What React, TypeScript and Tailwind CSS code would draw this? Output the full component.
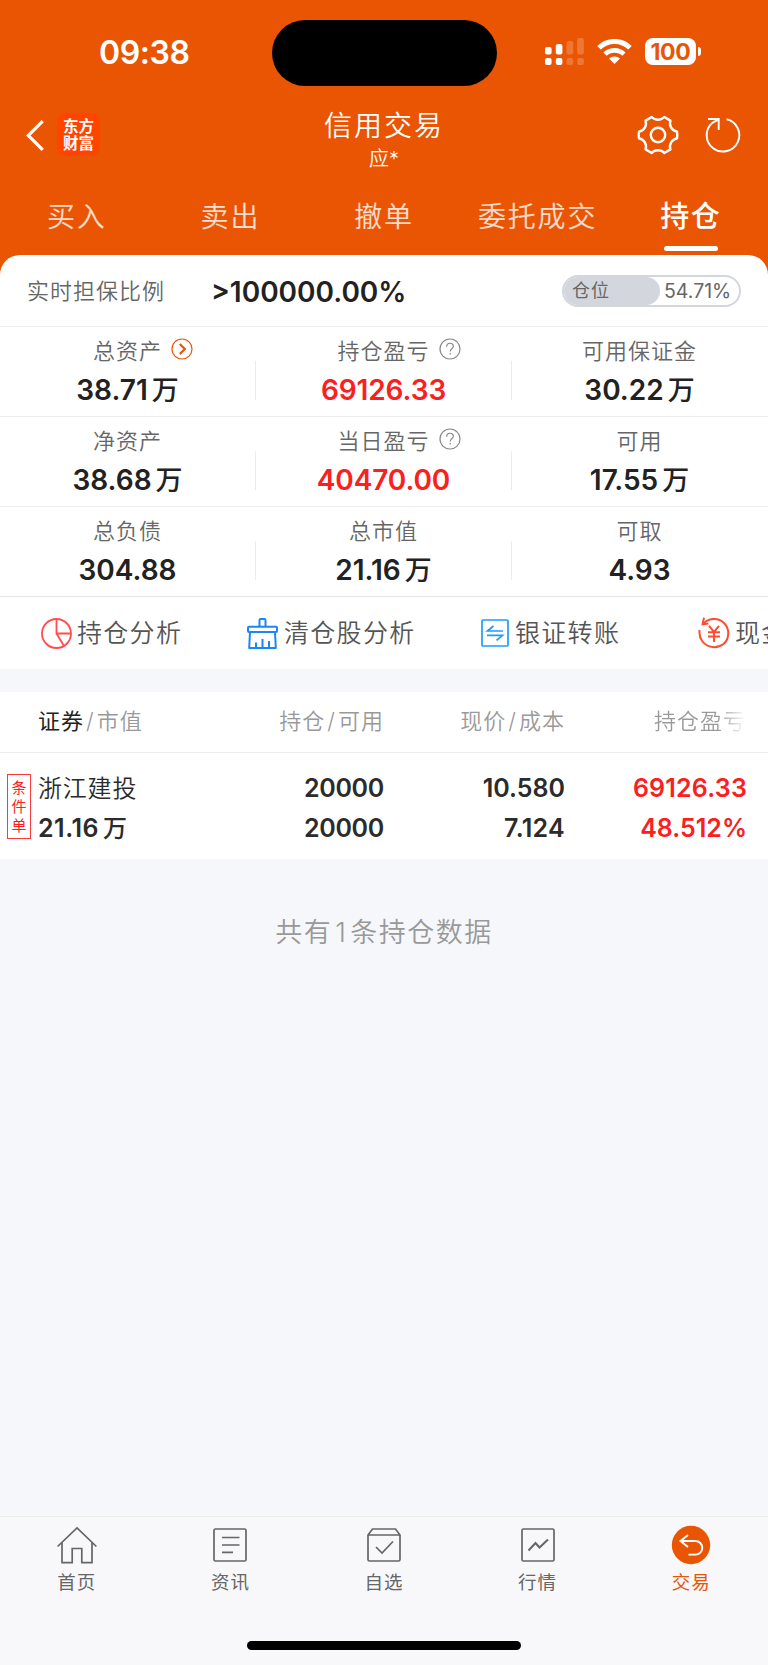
import type { ReactNode } from 'react';

const menu = ['买入', '卖出', '撤单', '委托成交', '持仓'];

interface Stat {
  label: string;
  value: string;
  unit?: string;
  red?: boolean;
  icon?: 'more' | 'help';
}

const stats: Stat[][] = [
  [
    { label: '总资产', value: '38.71', unit: '万', icon: 'more' },
    { label: '持仓盈亏', value: '69126.33', red: true, icon: 'help' },
    { label: '可用保证金', value: '30.22', unit: '万' },
  ],
  [
    { label: '净资产', value: '38.68', unit: '万' },
    { label: '当日盈亏', value: '40470.00', red: true, icon: 'help' },
    { label: '可用', value: '17.55', unit: '万' },
  ],
  [
    { label: '总负债', value: '304.88' },
    { label: '总市值', value: '21.16', unit: '万' },
    { label: '可取', value: '4.93' },
  ],
];

function StatusBar() {
  return (
    <div className="flex h-[106px] pt-5">
      <div className="w-[272px] pl-[99px] pt-[9px] text-[32px] leading-[48px] font-semibold tracking-[-0.4px]">09:38</div>
      <div className="h-[66px] w-[225px] rounded-full bg-black" />
      <svg className="ml-[48px] mt-[18px]" width="39" height="27" viewBox="0 0 39 27" fill="#fff">
        <rect x="0" y="9" width="6.6" height="7.5" rx="2" />
        <rect x="0" y="20" width="6.6" height="7" rx="2" />
        <rect x="10.8" y="6" width="6.6" height="10.5" rx="2" />
        <rect x="10.8" y="20" width="6.6" height="7" rx="2" />
        <g opacity="0.2">
          <rect x="21.6" y="3" width="6.6" height="13.5" rx="2" />
          <rect x="21.6" y="20" width="6.6" height="7" rx="2" />
          <rect x="32.2" y="0" width="6.6" height="16.5" rx="2" />
          <rect x="32.2" y="20" width="6.6" height="7" rx="2" />
        </g>
      </svg>
      <svg className="ml-[13px] mt-[19px]" width="35" height="25" viewBox="0 0 35 25" fill="none" stroke="#fff">
        <path d="M2 8.8 A22 22 0 0 1 33 8.8" strokeWidth="5" />
        <path d="M8 15.2 A13.6 13.6 0 0 1 27 15.2" strokeWidth="4.6" />
        <path d="M17.5 25 L12 19.6 A8 8 0 0 1 23 19.6 Z" fill="#fff" stroke="none" />
      </svg>
      <div className="ml-[13px] mt-[18px] flex h-[27px] w-[51px] items-center justify-center rounded-[8px] bg-white pt-px text-[23px] leading-none font-bold tracking-[-0.3px] text-[#ea5504]">
        100
      </div>
      <div className="ml-[2px] mt-[27px] h-[9px] w-[3px] rounded-r-full bg-white" />
    </div>
  );
}

function TitleBar() {
  return (
    <div className="flex h-[78px] justify-between">
      <div className="flex w-[250px] pl-[26px] pt-[7px]">
        <svg className="mt-[7px]" width="18" height="31" viewBox="0 0 18 31" fill="none" stroke="#fff" strokeWidth="3.2">
          <path d="M16.7 1.2 L2.2 15.5 L16.7 29.8" />
        </svg>
        <div className="ml-[13px] flex h-[43px] w-[43px] flex-col items-center justify-center rounded-[9px] bg-[#ff4400] pb-px font-['Noto_Sans_CJK_SC',sans-serif] text-[15.5px] leading-[17px] font-bold">
          <span>东方</span>
          <span>财富</span>
        </div>
      </div>
      <div className="flex flex-col items-center">
        <h1 className="pt-[1px] text-[28px] leading-[38px] font-[350] tracking-[2px]">信用交易</h1>
        <p className="mt-px text-[20px] leading-[26px] font-[350]">应*</p>
      </div>
      <div className="flex w-[250px] justify-end pr-[25px] pt-[9px]">
        <svg width="42" height="42" viewBox="0 0 42 42" fill="none" stroke="#fff" strokeWidth="2.4" strokeLinejoin="round">
          <path d="M14.7 2 C18 5.6 24 5.6 27.3 2 L33.4 5.6 C31.8 10.8 34.8 15.6 40 16.6 Q40.6 20 40 23.4 C34.8 24.4 31.8 29.2 33.4 34.4 L27.3 38 C24 34.4 18 34.4 14.7 38 L8.6 34.4 C10.2 29.2 7.2 24.4 2 23.4 Q1.4 20 2 16.6 C7.2 15.6 10.2 10.8 8.6 5.6 Z" />
          <circle cx="21" cy="20" r="7.2" />
        </svg>
        <svg className="ml-[26px]" width="38" height="42" viewBox="0 0 38 42" fill="none" stroke="#fff" strokeWidth="1.9">
          <path d="M21.6 4.3 A16.3 16.3 0 1 1 7.4 7.8 L13.6 4.4" />
          <path d="M3 4 H13.7 V15" />
        </svg>
      </div>
    </div>
  );
}

function Menu() {
  return (
    <div className="grid h-[71px] grid-cols-5">
      {menu.map((m) =>
        m === '持仓' ? (
          <div key={m} className="flex flex-col items-center pt-[13px] text-[29px] leading-[40px] font-medium tracking-[1.4px]">
            <span className="-ml-px">{m}</span>
            <div className="mt-[9px] h-[5px] w-[54px] rounded-full bg-white" />
          </div>
        ) : (
          <div key={m} className="pt-[13px] text-center text-[28px] leading-[40px] font-[350] tracking-[1.8px] text-white/80">
            {m}
          </div>
        )
      )}
    </div>
  );
}

function StatIcon({ type }: { type: 'more' | 'help' }) {
  return (
    <svg className="absolute top-[1px] left-full ml-[9px]" width="22" height="22" viewBox="0 0 22 22" fill="none">
      {type === 'more' ? (
        <g stroke="#ea5504">
          <circle cx="11" cy="11" r="10" strokeWidth="1.2" />
          <path d="M8.8 6 L13.8 11 L8.8 16" strokeWidth="2.2" />
        </g>
      ) : (
        <g stroke="#888" strokeWidth="1.2">
          <circle cx="11" cy="11" r="10" />
          <path d="M7.7 8.7 C7.7 4.2 14.4 4.2 14.4 8.3 C14.4 10.6 11.2 10.6 11.2 13.6" />
          <path d="M11.2 15 V16.6" />
        </g>
      )}
    </svg>
  );
}

function StatCell({ stat, divider }: { stat: Stat; divider: boolean }) {
  return (
    <div className="flex">
      <div className="flex flex-1 flex-col items-center pt-[10px] pr-px">
        <div className="relative text-[22px] leading-[28px] font-[350] tracking-[1px] text-[#666]">
          {stat.label}
          {stat.icon && <StatIcon type={stat.icon} />}
        </div>
        <div className={`mt-[8px] text-[28px] leading-[34px] font-semibold ${stat.red ? 'tracking-[-0.1px] text-[#fb2020]' : 'text-[#222]'}`}>
          {stat.value}
          {stat.unit && <span className="ml-[4px] text-[27px] leading-none font-medium">{stat.unit}</span>}
        </div>
      </div>
      {divider && <div className="-ml-px mt-[34px] h-[39px] w-px bg-[#ebebeb]" />}
    </div>
  );
}

function Action({ icon, children, className }: { icon: ReactNode; children: ReactNode; className?: string }) {
  return (
    <div className={`flex shrink-0 items-center ${className ?? ''}`}>
      {icon}
      <span className="text-[25px] leading-[36px] tracking-[1.3px] whitespace-nowrap">{children}</span>
    </div>
  );
}

function Actions() {
  return (
    <div className="flex h-[72px] overflow-hidden pl-[41px] font-[350] text-[#555]">
      <Action
        className="w-[206px]"
        icon={
          <svg className="mr-[5px]" width="31" height="31" viewBox="0 0 31 31" fill="none" stroke="#ff4d4f" strokeWidth="1.8">
            <circle cx="15.5" cy="15.5" r="14.5" />
            <path d="M15.5 1 V15.5 H30 M15.5 15.5 L23 28" />
          </svg>
        }
      >
        持仓分析
      </Action>
      <Action
        className="w-[234px]"
        icon={
          <svg className="mr-[6px]" width="31" height="31" viewBox="0 0 31 31" fill="none" stroke="#1c86f2" strokeWidth="2" strokeLinejoin="round">
            <path d="M12.5 8.7 V2.2 Q12.5 1 13.7 1 H17.3 Q18.5 1 18.5 2.2 V8.7" />
            <rect x="1" y="8.7" width="29" height="5.3" rx="1" />
            <path d="M3 14 L2.2 30 H28.8 L28 14 M9 30 V24.5 M15.5 30 V21 M22 30 V23" />
          </svg>
        }
      >
        清仓股分析
      </Action>
      <Action
        className="w-[217px]"
        icon={
          <svg className="mr-[6px]" width="28" height="28" viewBox="0 0 28 28" fill="none" stroke="#1e9bff" strokeWidth="1.7">
            <rect x="1" y="1" width="26" height="26" rx="1" />
            <path d="M22 12 H6.5 L12.5 7 M6 16.3 H21.5 L15.5 21.4" />
          </svg>
        }
      >
        银证转账
      </Action>
      <Action
        icon={
          <svg className="mr-[5px]" width="32" height="32" viewBox="0 0 32 32" fill="none" stroke="#ff4b33" strokeWidth="2">
            <path d="M4.5 7.5 C10 1 20 0 26 6 C32 12 31.5 22 25.5 27 C19 32 9.5 31 4.5 24.5 C1.5 20.5 1 17 1.6 13" />
            <path d="M6 0.6 L4.6 7.3 L10.4 6.4" />
            <path d="M11 8.8 L16 15 L21 8.8 M10 15.3 H22 M10 19.6 H22 M16 15 V25" />
          </svg>
        }
      >
        现金宝
      </Action>
    </div>
  );
}

function Holdings() {
  return (
    <>
      <div className="grid h-[61px] grid-cols-[384px_181px_181px] border-b border-[#ededed] bg-white text-[22px] leading-[59px] font-[350] tracking-[1px] text-[#999]">
        <div className="flex justify-between pl-[38px]">
          <span>
            <span className="font-normal text-[#222]">证券</span>
            <span className="mx-[2px]">/</span>市值
          </span>
          <span>持仓<span className="mx-[2px]">/</span>可用</span>
        </div>
        <div className="text-right">现价<span className="mx-[2px]">/</span>成本</div>
        <div className="bg-linear-to-r from-[#999] from-84% to-white to-100% bg-clip-text text-right text-transparent">持仓盈亏</div>
      </div>
      <div className="flex h-[106px] bg-white text-[25px] leading-[40px] font-semibold text-[#2b2b2b]">
        <div className="mt-[21px] ml-[7px] flex h-[65px] w-6 flex-col items-center justify-center border border-[#fb3b3b] text-[15px] leading-[19px] font-normal text-[#fb2020]">
          <span>条</span>
          <span>件</span>
          <span>单</span>
        </div>
        <div className="ml-[7px] w-[165px] pt-[16px]">
          <div className="text-[24px] font-[350] tracking-[0.8px]">浙江建投</div>
          <div className="-mt-px tracking-[0.5px]">
            21.16<span className="ml-[4px] text-[24px] leading-none font-medium">万</span>
          </div>
        </div>
        <div className="w-[181px] pt-[15px] text-right tracking-[-0.3px]">
          <div>20000</div>
          <div>20000</div>
        </div>
        <div className="w-[181px] pt-[15px] text-right">
          <div>10.580</div>
          <div className="tracking-[0.3px]">7.124</div>
        </div>
        <div className="w-[182px] pt-[15px] text-right text-[#fb2020]">
          <div className="tracking-[0.2px]">69126.33</div>
          <div>48.512%</div>
        </div>
      </div>
    </>
  );
}

function NavItem({ label, active, children }: { label: string; active?: boolean; children: ReactNode }) {
  return (
    <div className={`flex flex-col items-center ${active ? 'text-[#ea5504]' : 'text-[#666]'}`}>
      <svg className="mt-[8px]" width="40" height="40" viewBox="0 0 40 40" fill="none" stroke="currentColor" strokeWidth="1.7">
        {children}
      </svg>
      <span className="mt-[4px] text-[18.5px] leading-[26px] tracking-[1px]">{label}</span>
    </div>
  );
}

function BottomNav() {
  return (
    <div className="h-[149px] border-t border-[#ebebeb] bg-[#f8f8fb]">
      <div className="grid h-[124px] grid-cols-5">
        <NavItem label="首页">
          <path d="M0.6 21.5 L20 3 L39.4 21.5 M5 17.5 V37.6 H15.2 V23.5 H24.8 V37.6 H35 V17.5" />
        </NavItem>
        <NavItem label="资讯">
          <rect x="4" y="4" width="32" height="32" rx="1.5" />
          <path d="M12 12.5 H29.5 M12 20 H29.5 M12 27.3 H23" />
        </NavItem>
        <NavItem label="自选">
          <path d="M4 10 L8.5 4 H31.5 L36 10 V34.5 Q36 36 34.5 36 H5.5 Q4 36 4 34.5 Z M4 10 H36 M12 22 L18 28 L29 16.5" />
        </NavItem>
        <NavItem label="行情">
          <rect x="4" y="4" width="32" height="32" rx="1.5" />
          <path d="M10.5 25.5 L17.5 18 L21.5 22.5 L30 14.5" strokeWidth="2" />
        </NavItem>
        <NavItem label="交易" active>
          <circle cx="20" cy="20" r="19.2" fill="currentColor" stroke="none" />
          <path d="M17 10 L9.5 16 L17 22 M9.5 16 H24.5 A6.8 6.8 0 0 1 24.5 29.6 H17.5" stroke="#fff" strokeWidth="1.9" />
        </NavItem>
      </div>
      <div className="mx-auto h-[9px] w-[274px] rounded-full bg-black" />
    </div>
  );
}

export default function App() {
  return (
    <div className="flex h-[1665px] w-[768px] flex-col overflow-hidden bg-[#f6f7fa] font-[Inter,'Noto_Sans_CJK_SC',sans-serif]">
      <div className="bg-[#ea5504] text-white">
        <StatusBar />
        <TitleBar />
        <Menu />
        <div className="h-[71px] rounded-t-[20px] bg-white">
          <div className="flex h-full items-center pl-[27px]">
            <span className="w-[184px] pt-px text-[22px] font-[350] tracking-[1px] text-[#666]">实时担保比例</span>
            <span className="w-[351px] pt-[2px] text-[28px] font-semibold text-[#222]">&gt;100000.00%</span>
            <div className="flex h-8 w-[179px] items-center overflow-hidden rounded-full border-2 border-[#d3d6dd] leading-[28px] text-[#666]">
              <div className="w-[96px] rounded-r-full bg-[#d3d6dd] pl-[8px] text-[18px] tracking-[1px]">仓位</div>
              <span className="ml-[4px] text-[19.5px]">54.71%</span>
            </div>
          </div>
        </div>
      </div>
      <div className="bg-white">
        {stats.map((row, i) => (
          <div key={i} className="grid h-[90px] grid-cols-3 border-t border-[#ededed]">
            {row.map((s, j) => (
              <StatCell key={s.label} stat={s} divider={j < 2} />
            ))}
          </div>
        ))}
        <div className="border-t border-[#e6e6e6]">
          <Actions />
        </div>
      </div>
      <div className="h-[23px]" />
      <Holdings />
      <div className="flex-1 pt-[54px] text-center text-[27px] leading-[40px] font-[350] tracking-[1.5px] text-[#999]">
        共有<span className="mx-[3px]">1</span>条持仓数据
      </div>
      <BottomNav />
    </div>
  );
}
